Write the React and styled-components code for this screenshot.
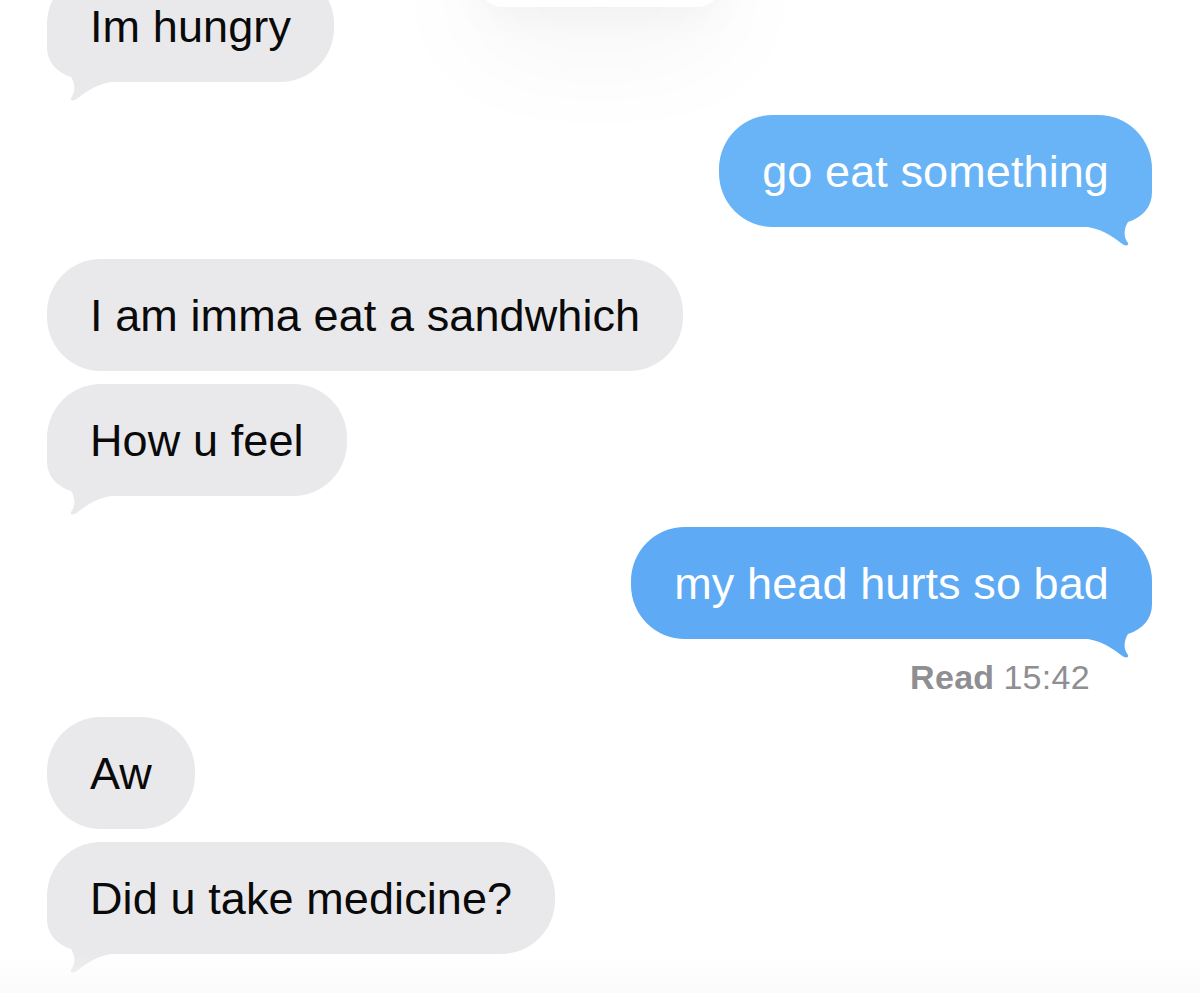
import React from 'react';
import styled, { createGlobalStyle } from 'styled-components';

const GlobalStyle = createGlobalStyle`
  html, body {
    margin: 0;
    padding: 0;
    background: #ffffff;
  }
  body {
    font-family: "Liberation Sans", Arial, sans-serif;
    -webkit-font-smoothing: antialiased;
  }
`;

const Screen = styled.div`
  position: relative;
  width: 1200px;
  height: 993px;
  overflow: hidden;
  background: #ffffff;
`;

const Thread = styled.div`
  display: flex;
  flex-direction: column;
  padding: 0 48px 0 47px;
  margin-top: -30px;
`;

const Row = styled.div`
  display: flex;
  justify-content: ${(p) => (p.$side === 'right' ? 'flex-end' : 'flex-start')};
  margin-top: ${(p) => p.$gap || 0}px;
`;

const Bubble = styled.div`
  position: relative;
  height: 112px;
  padding: 2px 43px 0;
  box-sizing: border-box;
  display: flex;
  align-items: center;
  border-radius: 54px;
  font-size: 45px;
  letter-spacing: 0.1px;
  white-space: nowrap;
  background: ${(p) => p.$bg};
  color: ${(p) => (p.$side === 'right' ? '#ffffff' : '#0a0a0a')};
`;

const BubbleText = styled.span`
  position: relative;
`;

const TailSvg = styled.svg`
  position: absolute;
  top: 56px;
  width: 64px;
  height: 80px;
  overflow: visible;
  ${(p) => (p.$side === 'right' ? 'right: 0; transform: scaleX(-1);' : 'left: 0;')}
`;

const ReadLine = styled.div`
  display: flex;
  justify-content: flex-end;
  margin-top: 20px;
  padding-right: 62px;
  height: 36px;
  line-height: 36px;
  font-size: 34px;
  color: #8e8e93;
  letter-spacing: 0.3px;

  b {
    font-weight: 700;
    margin-right: 9px;
  }
`;

const Popup = styled.div`
  position: absolute;
  top: -70px;
  left: 477px;
  width: 246px;
  height: 77px;
  border-radius: 26px;
  background: #ffffff;
  box-shadow: 0 10px 40px rgba(0, 0, 0, 0.035), 0 30px 120px rgba(0, 0, 0, 0.06);
`;

const BottomFade = styled.div`
  position: absolute;
  left: 0;
  right: 0;
  bottom: 0;
  height: 40px;
  background: linear-gradient(rgba(248, 248, 249, 0), rgba(248, 248, 249, 0.6));
  pointer-events: none;
`;

const GRAY = '#e9e9eb';

const Tail = ({ side, color }) => (
  <TailSvg $side={side} viewBox="0 0 64 80">
    <path
      d="M0 0 L0 21 C0 36 9 46 24 51 C28 57 29 66 24 72 C23 74 25 75 28 74 C37 68 46 59 64 56 L64 0 Z"
      fill={color}
    />
  </TailSvg>
);

const Message = ({ side = 'left', gap, tail, color, children }) => {
  const bg = color || GRAY;
  return (
    <Row $side={side} $gap={gap}>
      <Bubble $side={side} $bg={bg}>
        {tail && <Tail side={side} color={bg} />}
        <BubbleText>{children}</BubbleText>
      </Bubble>
    </Row>
  );
};

export default function App() {
  return (
    <Screen>
      <GlobalStyle />
      <Thread>
        <Message tail>Im hungry</Message>
        <Message side="right" gap={33} tail color="#68b4f6">go eat something</Message>
        <Message gap={32}>I am imma eat a sandwhich</Message>
        <Message gap={13} tail>How u feel</Message>
        <Message side="right" gap={31} tail color="#5eaaf4">my head hurts so bad</Message>
        <ReadLine>
          <b>Read</b>15:42
        </ReadLine>
        <Message gap={22}>Aw</Message>
        <Message gap={13} tail>Did u take medicine?</Message>
      </Thread>
      <Popup />
      <BottomFade />
    </Screen>
  );
}
